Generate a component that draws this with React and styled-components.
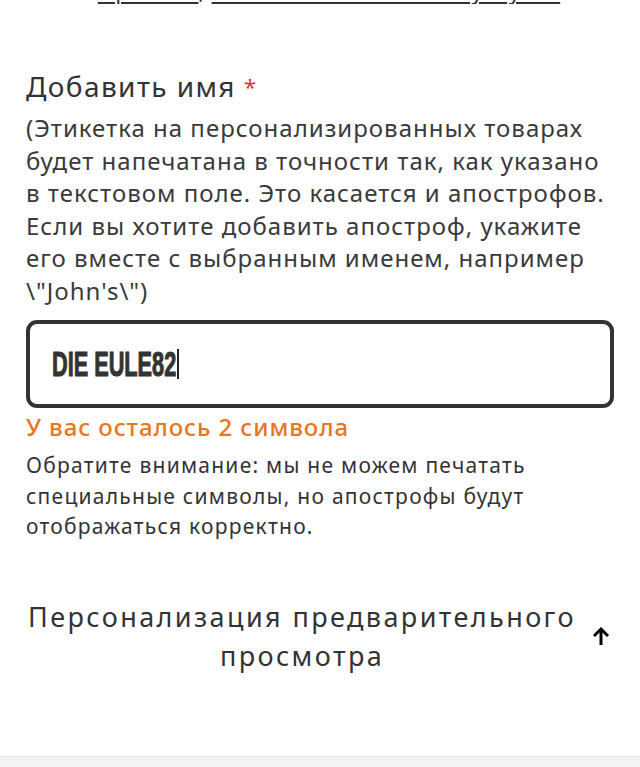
import React from "react";
import styled, { createGlobalStyle } from "styled-components";

const GlobalStyle = createGlobalStyle`
    html, body {
        margin: 0;
        padding: 0;
        background: #fff;
        font-family: "Noto Sans", "Open Sans", sans-serif;
        color: #333;
    }
`;

const Page = styled.div`
    min-height: 767px;
    display: flex;
    flex-direction: column;
    overflow: hidden;
`;

const Content = styled.div`
    padding: 0 26px;
    flex: 1;
`;

const LinksClip = styled.div`
    height: 4px;
    overflow: hidden;
    display: flex;
    justify-content: center;
    align-items: flex-end;
    padding-left: 18px;
`;

const LinksLine = styled.p`
    margin: 0;
    font-size: 23px;
    line-height: 26px;
    letter-spacing: 0.5px;
    white-space: nowrap;
    color: #333;
    transform: translateY(-1px);
`;

const Link = styled.a`
    color: #333;
    text-decoration: underline;
    text-decoration-thickness: 2px;
    text-underline-offset: 3px;
`;

const Label = styled.h2`
    margin: 64px 0 0;
    font-size: 28px;
    font-weight: 400;
    line-height: 36px;
    letter-spacing: 1.4px;
    color: #333;
`;

const Required = styled.span`
    color: #e2333a;
    font-size: 22px;
    vertical-align: top;
    margin-left: 8px;
`;

const Hint = styled.p`
    margin: 8px 0 0;
    font-size: 24px;
    line-height: 32.5px;
    letter-spacing: 1px;
    color: #3a3a3a;
`;

const NameField = styled.div`
    margin-top: 13px;
    height: 88px;
    box-sizing: border-box;
    border: 4px solid #333;
    border-radius: 11px;
    padding: 0 22px;
    display: flex;
    align-items: center;
`;

const NameText = styled.span`
    display: inline-block;
    font-family: "Liberation Sans", Arial, sans-serif;
    font-weight: 700;
    font-size: 35px;
    color: #333;
    -webkit-text-stroke: 1.1px #333;
    transform: scaleX(0.62);
    transform-origin: left center;
    width: 124px;
    white-space: nowrap;
`;

const Caret = styled.span`
    width: 1.5px;
    height: 30px;
    background: #222;
    margin-left: 1px;
`;

const Counter = styled.p`
    margin: 4px 0 0;
    font-size: 24px;
    font-weight: 500;
    line-height: 30px;
    letter-spacing: 0.9px;
    color: #e8761f;
`;

const Note = styled.p`
    margin: 8px 0 0;
    font-size: 21px;
    line-height: 30.5px;
    letter-spacing: 1.25px;
    color: #333;
`;

const PreviewRow = styled.div`
    margin-top: 55px;
    display: flex;
    align-items: center;
    padding-right: 4px;
`;

const PreviewTitle = styled.h3`
    flex: 1;
    margin: 0;
    text-align: center;
    font-size: 27px;
    font-weight: 400;
    line-height: 39px;
    letter-spacing: 2.4px;
    color: #333;
`;

const ArrowButton = styled.button`
    margin-left: 14px;
    width: 18px;
    height: 20px;
    padding: 0;
    border: none;
    background: none;
    display: flex;
    cursor: pointer;
`;

const FooterBar = styled.div`
    height: 10px;
    background: #f3f3f3;
    border-top: 1px solid #ececec;
`;

const ArrowUp = () => (
    <svg width="18" height="20" viewBox="0 0 18 20" fill="none">
        <path d="M9 19V3" stroke="#000" strokeWidth="3" />
        <path d="M2 10L9 3L16 10" stroke="#000" strokeWidth="3" />
    </svg>
);

const App = () => {
    return (
        <>
            <GlobalStyle />
            <Page>
                <Content>
                    <LinksClip>
                        <LinksLine>
                            <Link href="#">Правила</Link>, <Link href="#">Условия пользования услугой</Link>
                        </LinksLine>
                    </LinksClip>

                    <Label>
                        Добавить имя<Required>*</Required>
                    </Label>
                    <Hint>
                        (Этикетка на персонализированных товарах будет напечатана в точности так, как указано в текстовом поле. Это касается и апострофов. Если вы хотите добавить апостроф, укажите его вместе с выбранным именем, например \"John's\")
                    </Hint>

                    <NameField>
                        <NameText>DIE EULE82</NameText>
                        <Caret />
                    </NameField>
                    <Counter>У вас осталось 2 символа</Counter>
                    <Note>
                        Обратите внимание: мы не можем печатать специальные символы, но апострофы будут отображаться корректно.
                    </Note>

                    <PreviewRow>
                        <PreviewTitle>Персонализация предварительного просмотра</PreviewTitle>
                        <ArrowButton aria-label="Свернуть">
                            <ArrowUp />
                        </ArrowButton>
                    </PreviewRow>
                </Content>
                <FooterBar />
            </Page>
        </>
    );
};

export default App;
